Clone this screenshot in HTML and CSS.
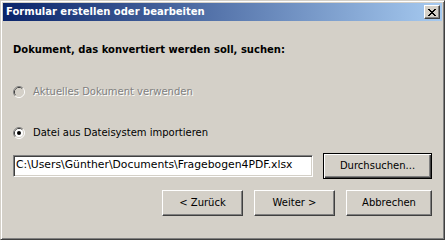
FILE: index.html
```html
<!DOCTYPE html>
<html lang="de">
<head>
  <meta charset="UTF-8" />
  <title>Formular erstellen oder bearbeiten</title>
  <link rel="stylesheet" href="styles.css">
</head>
<body>
  <div class="window">
    <div class="titlebar">
      <span class="title">Formular erstellen oder bearbeiten</span>
      <button class="close-btn" title="Schließen">
        <svg width="8" height="7" viewBox="0 0 8 7" shape-rendering="crispEdges">
          <rect x="0" y="0" width="2" height="1" />
          <rect x="6" y="0" width="2" height="1" />
          <rect x="1" y="1" width="2" height="1" />
          <rect x="5" y="1" width="2" height="1" />
          <rect x="2" y="2" width="4" height="1" />
          <rect x="3" y="3" width="2" height="1" />
          <rect x="2" y="4" width="4" height="1" />
          <rect x="1" y="5" width="2" height="1" />
          <rect x="5" y="5" width="2" height="1" />
          <rect x="0" y="6" width="2" height="1" />
          <rect x="6" y="6" width="2" height="1" />
        </svg>
      </button>
    </div>

    <div class="content">
      <p class="heading">Dokument, das konvertiert werden soll, suchen:</p>

      <label class="radio disabled">
        <svg class="radio-box" width="12" height="12" viewBox="0 0 12 12">
          <path d="M2.11 9.89 A5.5 5.5 0 0 1 9.89 2.11" stroke="#808080" fill="none" />
          <path d="M9.89 2.11 A5.5 5.5 0 0 1 2.11 9.89" stroke="#ffffff" fill="none" />
          <path d="M2.82 9.18 A4.5 4.5 0 0 1 9.18 2.82" stroke="#404040" fill="none" />
          <path d="M9.18 2.82 A4.5 4.5 0 0 1 2.82 9.18" stroke="#d4d0c8" fill="none" />
          <circle cx="6" cy="6" r="4" fill="#d4d0c8" />
        </svg>
        <span>Aktuelles Dokument verwenden</span>
      </label>

      <label class="radio">
        <svg class="radio-box" width="12" height="12" viewBox="0 0 12 12">
          <path d="M2.11 9.89 A5.5 5.5 0 0 1 9.89 2.11" stroke="#808080" fill="none" />
          <path d="M9.89 2.11 A5.5 5.5 0 0 1 2.11 9.89" stroke="#ffffff" fill="none" />
          <path d="M2.82 9.18 A4.5 4.5 0 0 1 9.18 2.82" stroke="#404040" fill="none" />
          <path d="M9.18 2.82 A4.5 4.5 0 0 1 2.82 9.18" stroke="#d4d0c8" fill="none" />
          <circle cx="6" cy="6" r="4" fill="#ffffff" />
          <circle cx="6" cy="6" r="2" fill="#000000" />
        </svg>
        <span>Datei aus Dateisystem importieren</span>
      </label>

      <div class="file-row">
        <div class="textbox">C:\Users\Günther\Documents\Fragebogen4PDF.xlsx</div>
        <button class="btn default">Durchsuchen...</button>
      </div>

      <div class="btn-row">
        <button class="btn">&lt; Zurück</button>
        <button class="btn">Weiter &gt;</button>
        <button class="btn wide">Abbrechen</button>
      </div>
    </div>
  </div>
</body>
</html>
```

FILE: styles.css
```css
body {
  margin: 0;
  font-family: "DejaVu Sans", sans-serif;
  font-size: 10px;
  color: #000;
  background: #d4d0c8;
}

.window {
  width: 445px;
  height: 240px;
  box-sizing: border-box;
  padding: 2px;
  background: #d4d0c8;
  border: 1px solid;
  border-color: #d4d0c8 #404040 #404040 #d4d0c8;
  box-shadow: inset 1px 1px #ffffff, inset -1px -1px #808080;
}

/* title bar */
.titlebar {
  height: 18px;
  display: flex;
  align-items: center;
  padding: 0 2px 0 3px;
  background: linear-gradient(to right, #0a246a, #a6caf0);
}

.title {
  color: #fff;
  font-weight: bold;
  line-height: 18px;
}

.close-btn {
  margin-left: auto;
  width: 16px;
  height: 14px;
  padding: 0;
  display: flex;
  align-items: center;
  justify-content: center;
  background: #d4d0c8;
  border: 1px solid;
  border-color: #ffffff #404040 #404040 #ffffff;
  box-shadow: inset -1px -1px #808080;
}

.close-btn svg {
  display: block;
  fill: #000;
  margin-right: 1px;
}

/* dialog body */
.content {
  margin-top: 1px;
  padding: 0 10px 0 10px;
  display: flex;
  flex-direction: column;
}

.heading {
  margin: 21px 0 0 0;
  font-weight: bold;
  line-height: 13px;
}

.radio {
  display: flex;
  align-items: center;
  gap: 8px;
  height: 13px;
  line-height: 13px;
}

.radio-box {
  display: block;
  flex: none;
}

.radio.disabled {
  margin-top: 29px;
  color: #808080;
  text-shadow: 1px 1px 0 #ffffff;
}

.radio + .radio {
  margin-top: 28px;
}

.file-row {
  margin-top: 14px;
  display: flex;
  align-items: center;
  gap: 10px;
}

.textbox {
  width: 300px;
  height: 22px;
  box-sizing: border-box;
  padding: 0 2px;
  font-size: 10.8px;
  line-height: 18px;
  background: #fff;
  border: 1px solid;
  border-color: #808080 #ffffff #ffffff #808080;
  box-shadow: inset 1px 1px #404040, inset -1px -1px #d4d0c8;
  white-space: nowrap;
  overflow: hidden;
}

.btn {
  width: 81px;
  height: 26px;
  padding: 0 0 1px 0;
  font-family: inherit;
  font-size: 10px;
  color: #000;
  background: #d4d0c8;
  border: 1px solid;
  border-color: #ffffff #404040 #404040 #ffffff;
  box-shadow: inset -1px -1px #808080;
}

.btn.wide {
  width: 86px;
}

.btn.default {
  width: 109px;
  border: 1px solid #000;
  box-shadow: inset 1px 1px #ffffff, inset -1px -1px #404040, inset -2px -2px #808080;
}

.btn-row {
  margin-top: 11px;
  display: flex;
  justify-content: flex-end;
  gap: 11px;
}
```
